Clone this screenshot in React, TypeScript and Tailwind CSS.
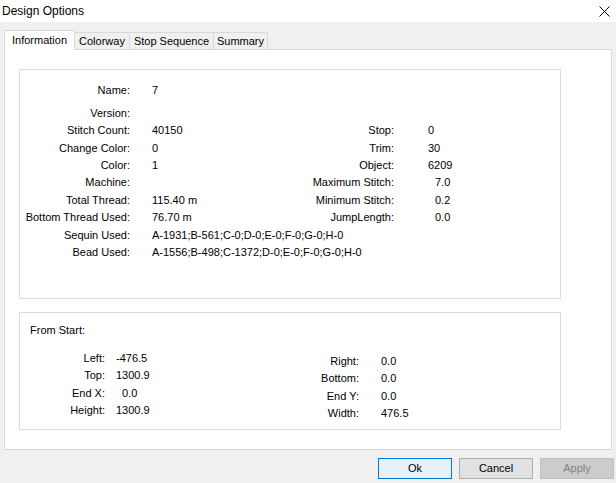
import React from 'react';

type Row = {
    label: string;
    value?: string;
    right?: { label: string; value: string; pad?: boolean };
    gap?: boolean;
};

const infoRows: Row[] = [
    { label: 'Name:', value: '7' },
    { label: 'Version:', gap: true },
    { label: 'Stitch Count:', value: '40150', right: { label: 'Stop:', value: '0' } },
    { label: 'Change Color:', value: '0', right: { label: 'Trim:', value: '30' } },
    { label: 'Color:', value: '1', right: { label: 'Object:', value: '6209' } },
    { label: 'Machine:', right: { label: 'Maximum Stitch:', value: '7.0', pad: true } },
    { label: 'Total Thread:', value: '115.40 m', right: { label: 'Minimum Stitch:', value: '0.2', pad: true } },
    { label: 'Bottom Thread Used:', value: '76.70 m', right: { label: 'JumpLength:', value: '0.0', pad: true } },
    { label: 'Sequin Used:', value: 'A-1931;B-561;C-0;D-0;E-0;F-0;G-0;H-0' },
    { label: 'Bead Used:', value: 'A-1556;B-498;C-1372;D-0;E-0;F-0;G-0;H-0' },
];

const leftStart = [
    { label: 'Left:', value: '-476.5' },
    { label: 'Top:', value: '1300.9' },
    { label: 'End X:', value: '0.0', shift: 'pl-[6px]' },
    { label: 'Height:', value: '1300.9' },
];

const rightStart = [
    { label: 'Right:', value: '0.0' },
    { label: 'Bottom:', value: '0.0' },
    { label: 'End Y:', value: '0.0' },
    { label: 'Width:', value: '476.5', shift: '-ml-[5px]' },
];

const tabs = [
    { name: 'Information', w: 'w-[71px]' },
    { name: 'Colorway', w: 'w-[56px]' },
    { name: 'Stop Sequence', w: 'w-[85px]' },
    { name: 'Summary', w: 'w-[55px]' },
];

const CloseIcon = () => (
    <svg width="11" height="11" viewBox="0 0 11 11" className="mr-[6px]">
        <path d="M0.5 0.5 L10.5 10.5 M10.5 0.5 L0.5 10.5" stroke="#000" strokeWidth="1" fill="none" />
    </svg>
);

const App: React.FC = () => {
    return (
        <div
            className="w-[616px] h-[483px] bg-[#f0f0f0] text-black text-[11px] flex flex-col overflow-hidden"
            style={{ fontFamily: '"Liberation Sans", Arial, sans-serif' }}
        >
            {/* title bar */}
            <div className="h-[22px] bg-white flex items-center justify-between pl-[2px] shrink-0">
                <span className="text-[12px] leading-none">Design Options</span>
                <CloseIcon />
            </div>

            <div className="flex flex-col px-[4px] pt-[8px]">
                {/* tabs */}
                <div className="flex items-end h-[19px] relative z-10">
                    {tabs.map((t, i) =>
                        i === 0 ? (
                            <div
                                key={t.name}
                                className={`${t.w} h-[20px] bg-white border border-b-0 border-[#d9d9d9] flex items-center justify-center -mb-px`}
                            >
                                {t.name}
                            </div>
                        ) : (
                            <div
                                key={t.name}
                                className={`${t.w} h-[17px] bg-[#f0f0f0] border border-b-0 border-[#d9d9d9] -ml-px flex items-center justify-center`}
                            >
                                {t.name}
                            </div>
                        )
                    )}
                </div>

                {/* panel */}
                <div className="w-[608px] h-[401px] bg-white border border-[#d9d9d9] pl-[14px] pt-[19px]">
                    {/* information group */}
                    <div className="w-[542px] h-[230px] border border-[#dcdcdc] pt-[12px]">
                        {infoRows.map((r) => (
                            <div key={r.label} className={`flex h-[17.4px] items-center whitespace-nowrap ${r.gap ? 'mt-[5px]' : ''}`}>
                                <div className="w-[110px] text-right">{r.label}</div>
                                <div className="ml-[22px] w-[150px]">{r.value}</div>
                                {r.right && (
                                    <>
                                        <div className="w-[92px] text-right">{r.right.label}</div>
                                        <div className={`ml-[34px] ${r.right.pad ? 'pl-[7px]' : ''}`}>{r.right.value}</div>
                                    </>
                                )}
                            </div>
                        ))}
                    </div>

                    {/* from start group */}
                    <div className="w-[542px] h-[118px] border border-[#dcdcdc] mt-[13px] pt-[9px]">
                        <div className="h-[17.4px] flex items-center pl-[10px]">From Start:</div>
                        <div className="flex mt-[10px]">
                            <div className="w-[239px] flex flex-col">
                                {leftStart.map((r) => (
                                    <div key={r.label} className="flex h-[17.4px] items-center">
                                        <div className="w-[85px] text-right">{r.label}</div>
                                        <div className={`ml-[11px] ${r.shift ?? ''}`}>{r.value}</div>
                                    </div>
                                ))}
                            </div>
                            <div className="flex flex-col mt-[3px]">
                                {rightStart.map((r) => (
                                    <div key={r.label} className="flex h-[17.4px] items-center">
                                        <div className="w-[100px] text-right">{r.label}</div>
                                        <div className={`ml-[22px] ${r.shift ?? ''}`}>{r.value}</div>
                                    </div>
                                ))}
                            </div>
                        </div>
                    </div>
                </div>
            </div>

            {/* buttons */}
            <div className="flex justify-end gap-[7px] pr-[2px] mt-[8px]">
                <button className="w-[74px] h-[21px] bg-[#e5f1fb] border border-[#0078d7] flex items-center justify-center">
                    Ok
                </button>
                <button className="w-[74px] h-[21px] bg-[#e1e1e1] border border-[#adadad] flex items-center justify-center">
                    Cancel
                </button>
                <button className="w-[74px] h-[21px] bg-[#cccccc] border border-[#bfbfbf] text-[#838383] flex items-center justify-center">
                    Apply
                </button>
            </div>
        </div>
    );
};

export default App;
